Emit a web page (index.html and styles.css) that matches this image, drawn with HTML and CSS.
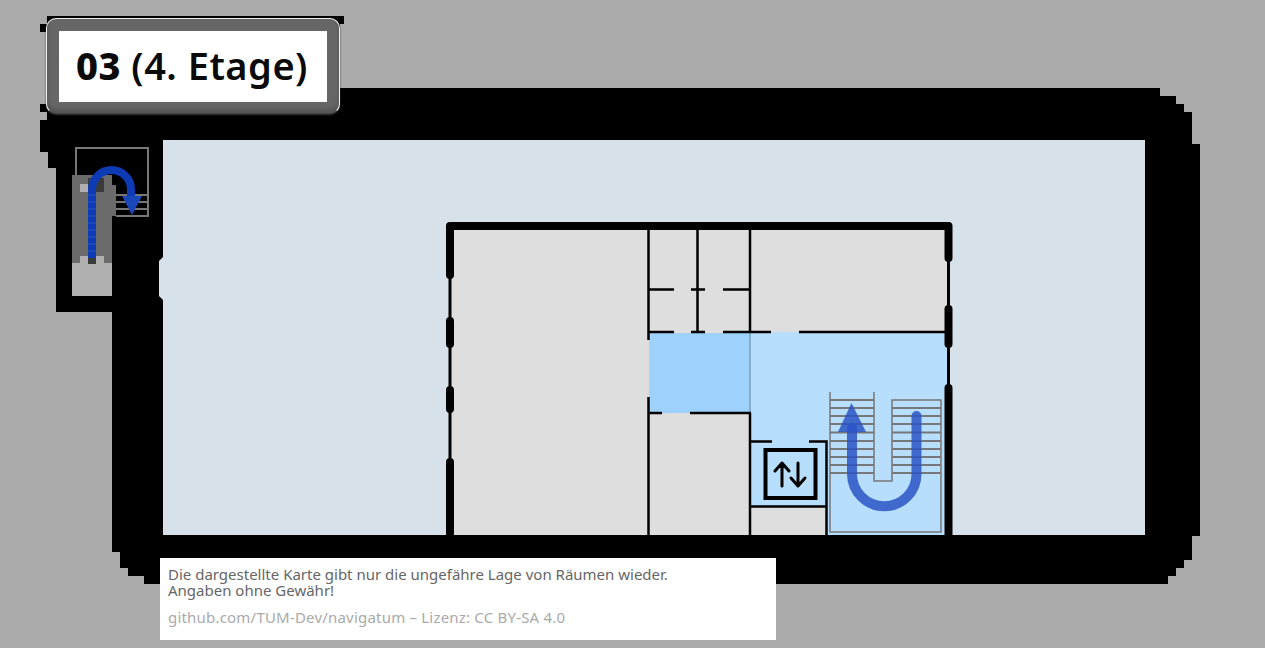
FILE: index.html
```html
<!DOCTYPE html>
<html lang="de">
<head>
    <meta charset="utf-8" />
    <title>03 (4. Etage)</title>
    <link rel="stylesheet" href="styles.css">
</head>
<body>
    <div class="map">
        <svg class="plan" width="1265" height="648" viewBox="0 0 1265 648">
            <!-- Gebaeude -->
            <polygon class="outside" points="47,16 344,16 344,24 340,24 340,88 1160,88 1160,96 1176,96 1176,104 1184,104 1184,112 1192,112 1192,144 1200,144 1200,536 1192,536 1192,560 1184,560 1184,568 1176,568 1176,576 1168,576 1168,584 144,584 144,576 128,576 128,568 120,568 120,552 112,552 112,312 56,312 56,168 48,168 48,152 40,152 40,120 47,120 47,112 40,112 40,104 47,104 47,32 40,32 40,24 47,24"/>
            <polygon class="floor" points="163,140 1145,140 1145,535 163,535 163,300 159,296 159,261 163,257"/>

            <!-- Raeume -->
            <rect class="room" x="452" y="228" width="495" height="307"/>
            <rect class="room-blue" x="750" y="332" width="197" height="203"/>
            <rect class="room" x="750" y="507" width="76" height="28"/>
            <rect class="room-dark" x="649" y="333" width="101" height="80"/>
            <rect class="tint" x="749" y="333" width="2" height="80"/>

            <!-- Waende -->
            <path class="wall-thick" d="M450 275V226H948.500V258M450 321V344M450 390V409M450 462V535M948.500 309V344M948.500 388V535"/>
            <path class="wall" d="M450 275V535M948.500 258V388"/>
            <path class="wall-inner" d="M648.500 230V340M697.500 230V332M750 230V333M648.500 397V535M750 413V535"/>
            <path class="wall-inner" d="M648 289.500H674M691 289.500H705M723 289.500H750M648 332H674M691 332H705M723 332H771M799 332H946M648 413H662M690 413H751"/>
            <path class="wall-inner" d="M751 441.500H772M809 441.500H826.500V535M750 506.500H826"/>

            <!-- Aufzug -->
            <rect class="lift" x="765.500" y="450" width="50" height="48"/>
            <path class="lift-arrow" d="M782 486V464M775 471L782 463L789 471M798 463V485M791 478L798 486L805 478"/>

            <!-- Treppe rechts -->
            <path class="stairs" d="M830 392V532H941V400H892V481H874V392"/>
            <path class="treads" d="M830 400H874M830 408H874M830 416H874M830 424H874M830 432.500H874M830 441H874M830 449H874M830 457H874M830 465H874M830 473H874"/>
            <path class="treads" d="M892 408H941M892 416H941M892 424H941M892 432.500H941M892 441H941M892 449H941M892 457H941M892 465H941M892 473H941"/>
            <path class="route" d="M916.500 416V474A32 32 0 0 1 852 474V428"/>
            <polygon class="route-head" points="851.500,403 866,432 838,432"/>

            <!-- Treppe links -->
            <path class="treads" d="M76 176V148H148V216H116M116 195H148M116 202H148M116 209H148"/>
            <rect class="shaft" x="72" y="175" width="40" height="88"/>
            <rect class="shaft" x="104" y="185" width="12" height="31"/>
            <rect class="landing" x="72" y="263" width="40" height="33"/>
            <rect class="landing" x="80" y="184" width="8" height="8"/>
            <rect class="landing" x="80" y="256" width="8" height="8"/>
            <rect class="landing" x="96" y="256" width="8" height="8"/>
            <rect class="shaft-dark" x="88" y="178" width="16" height="14"/>
            <rect class="shaft-dark" x="88" y="256" width="8" height="8"/>
            <path class="route-low" d="M92 258V189.500A19.500 19.500 0 0 1 131 189.500V198"/>
            <path class="route-steps" d="M88 195H96M88 202H96M88 209H96M88 216H96M88 223H96M88 230H96M88 237H96M88 244H96M88 251H96"/>
            <polygon class="route-low-head" points="122,196 142,196 132,215"/>
        </svg>

        <div class="level-chip">
            <div class="level-name"><b>03</b> (4. Etage)</div>
        </div>

        <div class="disclaimer">
            <p class="disclaimer-text">Die dargestellte Karte gibt nur die ungefähre Lage von Räumen wieder.<br>Angaben ohne Gewähr!</p>
            <p class="disclaimer-source">github.com/TUM-Dev/navigatum – Lizenz: CC BY-SA 4.0</p>
        </div>
    </div>
</body>
</html>
```

FILE: styles.css
```css
body{
    margin:0;
    background:#ababab;
}
.map{
    position:relative;
    width:1265px;
    height:648px;
    overflow:hidden;
    font-family:"Noto Sans","Open Sans",sans-serif;
}
.plan{
    display:block;
}

.outside{fill:#000;}
.floor{fill:#d6e1ea;}
.room{fill:#dedede;}
.room-blue{fill:#b8defe;}
.room-dark{fill:#9ed2fd;}
.tint{fill:#86aecb;}

.wall-thick,.wall,.wall-inner{
    fill:none;
    stroke:#000;
}
.wall-thick{stroke-width:8px;stroke-linecap:round;stroke-linejoin:round;}
.wall{stroke-width:3px;}
.wall-inner{stroke-width:2.500px;}

.lift{fill:none;stroke:#000;stroke-width:4px;}
.lift-arrow{fill:none;stroke:#000;stroke-width:3px;stroke-linecap:round;stroke-linejoin:round;}

.stairs{fill:none;stroke:#777;stroke-width:1.500px;}
.treads{fill:none;stroke:#777;stroke-width:2px;}
.route{fill:none;stroke:#2a55c4;stroke-width:10px;stroke-linecap:round;opacity:.85;}
.route-head{fill:#2a55c4;opacity:.85;}

.shaft{fill:#6b6b6b;}
.shaft-dark{fill:#3b3b3b;}
.landing{fill:#b0b0b0;}
.route-low{fill:none;stroke:#0d3ab5;stroke-width:8px;}
.route-low-head{fill:#1a47b8;}
.route-steps{fill:none;stroke:#2c55b8;stroke-width:1px;}

.level-chip{
    position:absolute;
    left:46px;
    top:18px;
    box-sizing:border-box;
    width:294px;
    height:96px;
    padding:12px;
    background:#666;
    border:1px solid #eee;
    border-bottom-color:#444;
    border-radius:10px;
    box-shadow:0 1px 2px #333,inset 0 -4px 4px #555;
}
.level-name{
    box-sizing:border-box;
    height:71px;
    padding-left:17px;
    background:#fff;
    color:#0a0a0a;
    font-size:38px;
    font-weight:600;
    letter-spacing:.5px;
    line-height:68px;
    white-space:nowrap;
}
.level-name b{font-weight:800;}

.disclaimer{
    position:absolute;
    left:160px;
    top:558px;
    box-sizing:border-box;
    width:616px;
    height:82px;
    padding:9px 8px;
    background:#fff;
    font-size:15px;
}
.disclaimer-text{
    margin:0;
    color:#666;
    line-height:15.500px;
}
.disclaimer-source{
    margin:9px 0 0;
    color:#aaa;
    letter-spacing:.2px;
    line-height:20px;
}
```
